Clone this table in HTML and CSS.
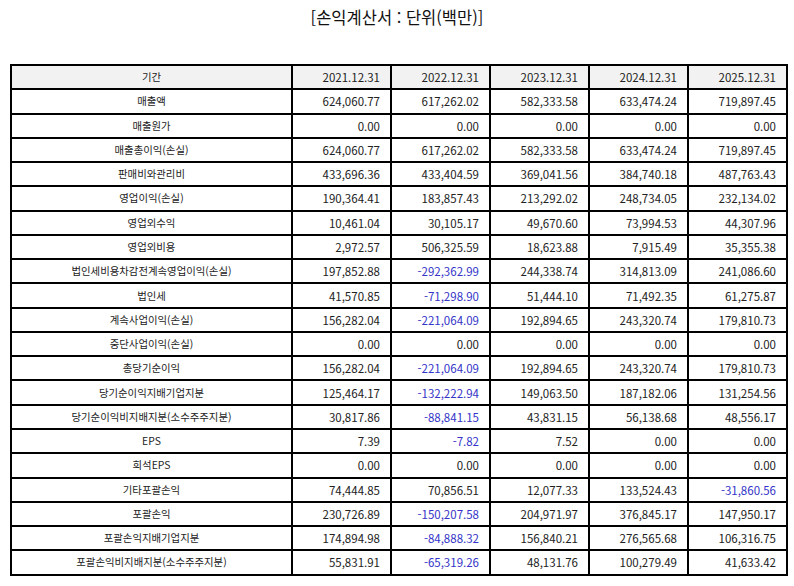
FILE: index.html
```html
<!DOCTYPE html>
<html lang="ko">
<head>
<meta charset="utf-8">
<title>손익계산서</title>
<link rel="stylesheet" href="styles.css">
</head>
<body>
<h1 class="title">[손익계산서 : 단위(백만)]</h1>
<table class="fin">
<colgroup><col class="c-label"><col class="c-val"><col class="c-val"><col class="c-val"><col class="c-val"><col class="c-val"></colgroup>
<thead>
<tr><th class="lbl">기간</th><th>2021.12.31</th><th>2022.12.31</th><th>2023.12.31</th><th>2024.12.31</th><th>2025.12.31</th></tr>
</thead>
<tbody>
<tr><td class="lbl">매출액</td><td>624,060.77</td><td>617,262.02</td><td>582,333.58</td><td>633,474.24</td><td>719,897.45</td></tr>
<tr><td class="lbl">매출원가</td><td>0.00</td><td>0.00</td><td>0.00</td><td>0.00</td><td>0.00</td></tr>
<tr><td class="lbl">매출총이익(손실)</td><td>624,060.77</td><td>617,262.02</td><td>582,333.58</td><td>633,474.24</td><td>719,897.45</td></tr>
<tr><td class="lbl">판매비와관리비</td><td>433,696.36</td><td>433,404.59</td><td>369,041.56</td><td>384,740.18</td><td>487,763.43</td></tr>
<tr><td class="lbl">영업이익(손실)</td><td>190,364.41</td><td>183,857.43</td><td>213,292.02</td><td>248,734.05</td><td>232,134.02</td></tr>
<tr><td class="lbl">영업외수익</td><td>10,461.04</td><td>30,105.17</td><td>49,670.60</td><td>73,994.53</td><td>44,307.96</td></tr>
<tr><td class="lbl">영업외비용</td><td>2,972.57</td><td>506,325.59</td><td>18,623.88</td><td>7,915.49</td><td>35,355.38</td></tr>
<tr><td class="lbl">법인세비용차감전계속영업이익(손실)</td><td>197,852.88</td><td class="neg">-292,362.99</td><td>244,338.74</td><td>314,813.09</td><td>241,086.60</td></tr>
<tr><td class="lbl">법인세</td><td>41,570.85</td><td class="neg">-71,298.90</td><td>51,444.10</td><td>71,492.35</td><td>61,275.87</td></tr>
<tr><td class="lbl">계속사업이익(손실)</td><td>156,282.04</td><td class="neg">-221,064.09</td><td>192,894.65</td><td>243,320.74</td><td>179,810.73</td></tr>
<tr><td class="lbl">중단사업이익(손실)</td><td>0.00</td><td>0.00</td><td>0.00</td><td>0.00</td><td>0.00</td></tr>
<tr><td class="lbl">총당기순이익</td><td>156,282.04</td><td class="neg">-221,064.09</td><td>192,894.65</td><td>243,320.74</td><td>179,810.73</td></tr>
<tr><td class="lbl">당기순이익지배기업지분</td><td>125,464.17</td><td class="neg">-132,222.94</td><td>149,063.50</td><td>187,182.06</td><td>131,254.56</td></tr>
<tr><td class="lbl">당기순이익비지배지분(소수주주지분)</td><td>30,817.86</td><td class="neg">-88,841.15</td><td>43,831.15</td><td>56,138.68</td><td>48,556.17</td></tr>
<tr><td class="lbl">EPS</td><td>7.39</td><td class="neg">-7.82</td><td>7.52</td><td>0.00</td><td>0.00</td></tr>
<tr><td class="lbl">희석EPS</td><td>0.00</td><td>0.00</td><td>0.00</td><td>0.00</td><td>0.00</td></tr>
<tr><td class="lbl">기타포괄손익</td><td>74,444.85</td><td>70,856.51</td><td>12,077.33</td><td>133,524.43</td><td class="neg">-31,860.56</td></tr>
<tr><td class="lbl">포괄손익</td><td>230,726.89</td><td class="neg">-150,207.58</td><td>204,971.97</td><td>376,845.17</td><td>147,950.17</td></tr>
<tr><td class="lbl">포괄손익지배기업지분</td><td>174,894.98</td><td class="neg">-84,888.32</td><td>156,840.21</td><td>276,565.68</td><td>106,316.75</td></tr>
<tr><td class="lbl">포괄손익비지배지분(소수주주지분)</td><td>55,831.91</td><td class="neg">-65,319.26</td><td>48,131.76</td><td>100,279.49</td><td>41,633.42</td></tr>
</tbody>
</table>
</body>
</html>
```
FILE: styles.css
```css
html, body {
  margin: 0;
  padding: 0;
  background: #fff;
}
body {
  font-family: "Noto Sans CJK KR", "Noto Sans", sans-serif;
  color: #222;
}
.title {
  margin: 0;
  height: 64px;
  padding-top: 5px;
  box-sizing: border-box;
  font-size: 16.5px;
  font-weight: normal;
  line-height: 24px;
  text-align: center;
  color: #111;
}
.fin {
  margin-left: 10px;
  width: 776px;
  table-layout: fixed;
  border-collapse: separate;
  border-spacing: 0;
  border: 1px solid #000;
  font-size: 11.5px;
}
.c-label { width: 281px; }
.c-val { width: 99px; }
.fin th, .fin td {
  border: 1px solid #000;
  height: 22.28px;
  padding: 0 10px 0 4px;
  text-align: right;
  font-weight: normal;
  line-height: 14px;
  white-space: nowrap;
}
.fin th {
  background: #f2f2f2;
}
.fin .lbl {
  text-align: center;
  padding: 0 4px;
  font-size: 10.4px;
}
.fin .neg {
  color: #3434c8;
}
```
